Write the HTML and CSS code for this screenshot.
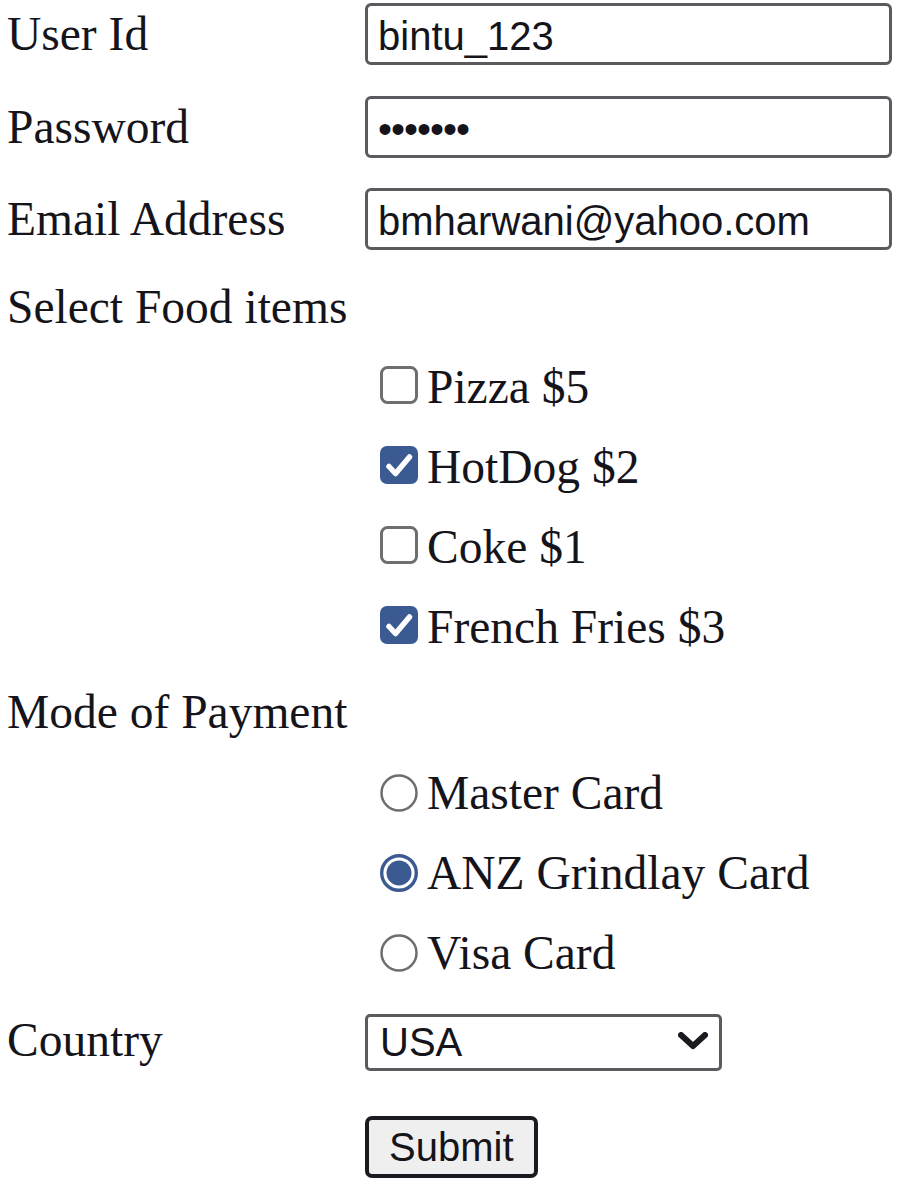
FILE: index.html
```html
<!DOCTYPE html>
<html lang="en">
<head>
<meta charset="utf-8">
<title>Order Form</title>
<link rel="stylesheet" href="styles.css">
</head>
<body>
<form class="form">
  <div class="row r-user">
    <label class="label" for="uid">User Id</label>
    <input class="field" id="uid" type="text" value="bintu_123">
  </div>
  <div class="row r-pass">
    <label class="label" for="pwd">Password</label>
    <input class="field pass" id="pwd" type="password" value="1234567">
  </div>
  <div class="row r-mail">
    <label class="label" for="mail">Email Address</label>
    <input class="field" id="mail" type="text" value="bmharwani@yahoo.com">
  </div>

  <div class="section s-food">Select Food items</div>
  <div class="opt first">
    <span class="box"><svg width="38" height="38" viewBox="0 0 38 38"><rect x="1.5" y="1.5" width="35" height="35" rx="6" fill="#fff" stroke="#6e6e6e" stroke-width="3"/></svg></span>
    <span class="txt">Pizza $5</span>
  </div>
  <div class="opt">
    <span class="box"><svg width="38" height="38" viewBox="0 0 38 38"><rect x="0" y="0" width="38" height="38" rx="7" fill="#3c5a92"/><path d="M9 20.5 L15.5 27.5 L29.5 11" fill="none" stroke="#fff" stroke-width="5.5" stroke-linecap="round" stroke-linejoin="round"/></svg></span>
    <span class="txt">HotDog $2</span>
  </div>
  <div class="opt">
    <span class="box"><svg width="38" height="38" viewBox="0 0 38 38"><rect x="1.5" y="1.5" width="35" height="35" rx="6" fill="#fff" stroke="#6e6e6e" stroke-width="3"/></svg></span>
    <span class="txt">Coke $1</span>
  </div>
  <div class="opt">
    <span class="box"><svg width="38" height="38" viewBox="0 0 38 38"><rect x="0" y="0" width="38" height="38" rx="7" fill="#3c5a92"/><path d="M9 20.5 L15.5 27.5 L29.5 11" fill="none" stroke="#fff" stroke-width="5.5" stroke-linecap="round" stroke-linejoin="round"/></svg></span>
    <span class="txt">French Fries $3</span>
  </div>

  <div class="section s-pay">Mode of Payment</div>
  <div class="opt radio first">
    <span class="box"><svg width="38" height="38" viewBox="0 0 38 38"><circle cx="19" cy="19" r="17.5" fill="#fff" stroke="#6e6e6e" stroke-width="2.5"/></svg></span>
    <span class="txt">Master Card</span>
  </div>
  <div class="opt radio">
    <span class="box"><svg width="38" height="38" viewBox="0 0 38 38"><circle cx="19" cy="19" r="17.3" fill="#fff" stroke="#3c5a92" stroke-width="3.4"/><circle cx="19" cy="19" r="12.5" fill="#3c5a92"/></svg></span>
    <span class="txt">ANZ Grindlay Card</span>
  </div>
  <div class="opt radio">
    <span class="box"><svg width="38" height="38" viewBox="0 0 38 38"><circle cx="19" cy="19" r="17.5" fill="#fff" stroke="#6e6e6e" stroke-width="2.5"/></svg></span>
    <span class="txt">Visa Card</span>
  </div>

  <div class="row r-country">
    <label class="label" for="country">Country</label>
    <div class="select-wrap">
      <select class="select" id="country">
        <option>USA</option>
        <option>India</option>
        <option>UK</option>
      </select>
      <svg class="chev" width="30" height="18" viewBox="0 0 30 18"><path d="M3 3 L15 14 L27 3" fill="none" stroke="#1b1a20" stroke-width="6" stroke-linecap="round" stroke-linejoin="round"/></svg>
    </div>
  </div>

  <div class="row r-submit">
    <span class="label"></span>
    <button class="btn" type="button">Submit</button>
  </div>
</form>
</body>
</html>
```

FILE: styles.css
```css
html, body {
  margin: 0;
  padding: 0;
  background: #ffffff;
}

body {
  font-family: "Liberation Serif", "Times New Roman", serif;
  font-size: 47.5px;
  color: #15141a;
}

.form {
  display: flex;
  flex-direction: column;
  padding: 3px 8px 0 7px;
}

.row {
  display: flex;
  align-items: baseline;
}

.label {
  flex: none;
  width: 358px;
  line-height: 54px;
}

.r-pass { margin-top: 31px; }
.r-mail { margin-top: 30px; }

.field {
  box-sizing: border-box;
  width: 527px;
  height: 62px;
  margin: 0;
  padding: 4px 9px 0 10px;
  border: 3px solid #5a5a5f;
  border-radius: 6px;
  background: #fff;
  font-family: "Liberation Sans", Arial, sans-serif;
  font-size: 40px;
  color: #15141a;
  outline: none;
}

.field.pass {
  letter-spacing: -1px;
}

.section {
  line-height: 54px;
}
.s-food { margin-top: 30px; }
.s-pay { margin-top: 31px; }

.opt {
  display: flex;
  align-items: baseline;
  padding-left: 373px;
  line-height: 54px;
  margin-top: 26px;
}
.opt.radio { margin-top: 26px; }
.s-pay + .opt.radio { margin-top: 27px; }

.box {
  display: inline-block;
  width: 38px;
  height: 38px;
  margin-right: 9px;
  flex: none;
  align-self: flex-end;
  margin-bottom: 10px;
}
.box svg { display: block; }

.opt.radio .box {
  margin-bottom: 8px;
}

.r-country { margin-top: 33px; }

.select-wrap {
  position: relative;
  width: 357px;
}

.select {
  -webkit-appearance: none;
  appearance: none;
  box-sizing: border-box;
  width: 357px;
  height: 57px;
  margin: 0;
  padding: 0 0 0 12px;
  border: 3px solid #5a5a5f;
  border-radius: 5px;
  background: #fff;
  font-family: "Liberation Sans", Arial, sans-serif;
  font-size: 40px;
  color: #15141a;
  outline: none;
}

.chev {
  position: absolute;
  right: 14px;
  top: 19px;
  pointer-events: none;
}

.r-submit {
  margin-top: 45px;
  align-items: flex-start;
}

.btn {
  box-sizing: border-box;
  height: 62px;
  margin: 0;
  padding: 0 20px;
  border: 4px solid #1b1a20;
  border-radius: 7px;
  background: #efefef;
  font-family: "Liberation Sans", Arial, sans-serif;
  font-size: 40px;
  color: #15141a;
  line-height: 1;
}
```
